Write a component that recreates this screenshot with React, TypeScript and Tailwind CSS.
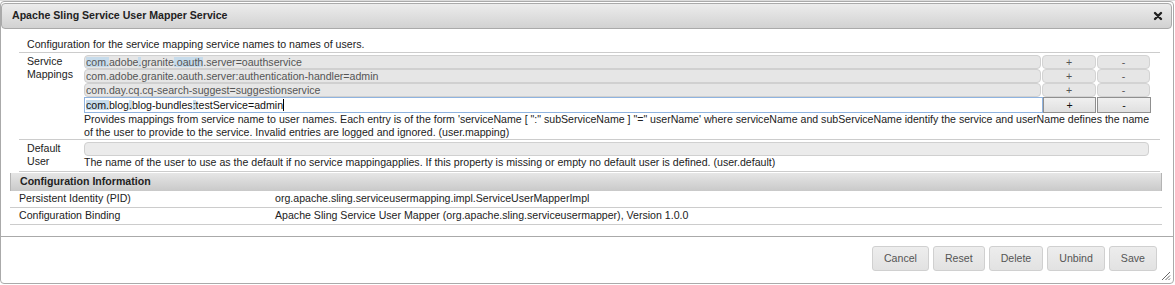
import React from "react";

const hl = "bg-[#c6dbeb]";

function SmallBtn({ label, w, focused }: { label: string; w: string; focused?: boolean }) {
  if (focused) {
    return (
      <div
        className={`${w} h-[16px] flex items-center justify-center border border-[#8f8f8f] bg-gradient-to-b from-[#f0f0f0] to-[#e0e0e0] text-[#111] leading-none`}
      >
        {label}
      </div>
    );
  }
  return (
    <div
      className={`${w} h-[14px] flex items-center justify-center border border-[#d3d3d3] rounded-[4px] bg-[#e6e6e6] text-[#555] leading-none`}
    >
      {label}
    </div>
  );
}

function DisabledInput({ children }: { children: React.ReactNode }) {
  return (
    <div className="w-[957px] h-[14px] border border-[#d0d0d0] rounded-[4px] bg-[#e6e6e6] text-[#555] pl-[1px] flex items-center leading-none whitespace-nowrap overflow-hidden">
      {children}
    </div>
  );
}

export default function App() {
  return (
    <div className="w-[1175px] h-[285px] bg-white overflow-hidden font-['Liberation_Sans',Arial,sans-serif] text-[10.6px] text-[#222]">
      <div className="h-px bg-[#dcdcdc]" />
      <div className="relative w-[1174px] h-[283px] border border-[#aaa] rounded-[4px] flex flex-col bg-white">
        {/* Title bar */}
        <div className="mt-px mr-px h-[26px] border border-[#aaa] rounded-[4px] bg-gradient-to-b from-[#ececec] to-[#d2d2d2] flex items-center justify-between pl-[10px] pr-[8px]">
          <span className="font-bold text-[#222]">Apache Sling Service User Mapper Service</span>
          <svg width="10" height="10" viewBox="0 0 10 10">
            <path d="M2 2 L8 8 M8 2 L2 8" stroke="#222" strokeWidth="2.4" strokeLinecap="round" />
          </svg>
        </div>

        {/* Content */}
        <div className="h-[207px] pt-[6px]">
          {/* Form table */}
          <div className="ml-[18px] w-[1141px]">
            <div className="pt-[3px] pb-px pl-[8px] leading-[13px] border-b border-[#cccccc]">
              Configuration for the service mapping service names to names of users.
            </div>

            {/* Service Mappings */}
            <div className="flex pt-[2px] border-b border-[#cccccc]">
              <div className="w-[65px] pl-[8px] leading-[13px]">
                Service
                <br />
                Mappings
              </div>
              <div className="flex flex-col">
                <div className="flex">
                  <DisabledInput>
                    <span className={hl}>com.</span>adobe<span className={hl}>.</span>granite<span className={hl}>.oauth</span>.server=oauthservice
                  </DisabledInput>
                  <div className="ml-px"><SmallBtn label="+" w="w-[54px]" /></div>
                  <div className="ml-px"><SmallBtn label="-" w="w-[53px]" /></div>
                </div>
                <div className="flex">
                  <DisabledInput>com.adobe.granite.oauth.server:authentication-handler=admin</DisabledInput>
                  <div className="ml-px"><SmallBtn label="+" w="w-[54px]" /></div>
                  <div className="ml-px"><SmallBtn label="-" w="w-[53px]" /></div>
                </div>
                <div className="flex">
                  <DisabledInput>com.day.cq.cq-search-suggest=suggestionservice</DisabledInput>
                  <div className="ml-px"><SmallBtn label="+" w="w-[54px]" /></div>
                  <div className="ml-px"><SmallBtn label="-" w="w-[53px]" /></div>
                </div>
                <div className="flex">
                  <div className="w-[959px] h-[16px] border border-[#8fb3df] bg-white text-[#111] pl-[1px] flex items-center leading-none whitespace-nowrap">
                    <span className={hl}>com.</span>blog<span className={hl}>.</span>blog-bundles<span className={hl}>:</span>testService=admin
                    <span className="inline-block w-px h-[12px] bg-black" />
                  </div>
                  <SmallBtn label="+" w="w-[53px]" focused />
                  <div className="ml-px"><SmallBtn label="-" w="w-[54px]" focused /></div>
                </div>
                <div className="leading-[13px] whitespace-nowrap">
                  Provides mappings from service name to user names. Each entry is of the form 'serviceName [ ":" subServiceName ] "=" userName' where serviceName and subServiceName identify the service and userName defines the name
                  <br />
                  of the user to provide to the service. Invalid entries are logged and ignored. (user.mapping)
                </div>
              </div>
            </div>

            {/* Default User */}
            <div className="flex pt-[2px] pb-[2px] border-b border-[#cccccc]">
              <div className="w-[65px] pl-[8px] leading-[13px]">
                Default
                <br />
                User
              </div>
              <div className="flex flex-col">
                <div className="w-[1065px] h-[14px] border border-[#d0d0d0] rounded-[4px] bg-[#ebebeb]" />
                <div className="leading-[13px] whitespace-nowrap">
                  The name of the user to use as the default if no service mappingapplies. If this property is missing or empty no default user is defined. (user.default)
                </div>
              </div>
            </div>
          </div>

          {/* Configuration information */}
          <div className="ml-[9px] mt-px w-[1152px]">
            <div className="h-[18px] border-x border-[#b4b4b4] bg-gradient-to-b from-[#e6e6e6] to-[#c9c9c9] font-bold flex items-center pl-[9px]">
              Configuration Information
            </div>
            <div className="h-[17px] border-b border-[#cccccc] flex items-center">
              <div className="w-[265px] pl-[9px]">Persistent Identity (PID)</div>
              <div>org.apache.sling.serviceusermapping.impl.ServiceUserMapperImpl</div>
            </div>
            <div className="h-[17px] border-b border-[#cccccc] flex items-center">
              <div className="w-[265px] pl-[9px]">Configuration Binding</div>
              <div>Apache Sling Service User Mapper (org.apache.sling.serviceusermapper), Version 1.0.0</div>
            </div>
          </div>
        </div>

        {/* Button pane */}
        <div className="h-[47px] border-t border-[#aaa] flex justify-end items-start pt-[9px] pr-[16px] gap-[4px]">
          {["Cancel", "Reset", "Delete", "Unbind", "Save"].map((b) => (
            <div
              key={b}
              className="h-[25px] px-[11px] flex items-center border border-[#d0d0d0] rounded-[3px] bg-gradient-to-b from-[#ededed] to-[#e2e2e2] text-[#555]"
            >
              {b}
            </div>
          ))}
        </div>

        {/* resize grip */}
        <svg className="absolute right-[2px] bottom-[2px]" width="10" height="10" viewBox="0 0 10 10">
          <path d="M9 1 L1 9 M9 4.5 L4.5 9 M9 7.5 L7.5 9" stroke="#666" strokeWidth="1" />
        </svg>
      </div>
    </div>
  );
}
